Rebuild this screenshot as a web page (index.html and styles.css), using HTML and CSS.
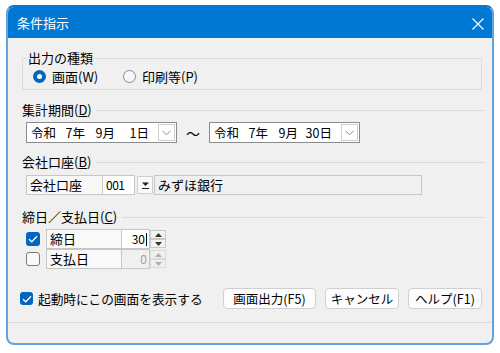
FILE: index.html
```html
<!DOCTYPE html>
<html lang="ja">
<head>
<meta charset="utf-8">
<title>条件指示</title>
<link rel="stylesheet" href="styles.css">
</head>
<body>
<div class="window">
  <div class="titlebar">
    <span class="title">条件指示</span>
    <svg class="close" width="12" height="12" viewBox="0 0 12 12"><path d="M0.5 0.5L11.5 11.5M11.5 0.5L0.5 11.5" stroke="#fff" stroke-width="1.1" fill="none"/></svg>
  </div>
  <div class="content">
    <fieldset class="group">
      <legend>出力の種類</legend>
      <div class="radios">
        <label class="radio r1"><span class="rb on"></span>画面(W)</label>
        <label class="radio"><span class="rb"></span>印刷等(P)</label>
      </div>
    </fieldset>

    <div class="sect s-d"><span>集計期間(<u>D</u>)</span></div>
    <div class="daterow">
      <div class="combo">
        <span class="dt"><span class="era">令和</span><span class="y">7年</span><span class="m">9月</span><span class="d">1日</span></span>
        <span class="ddbtn"><svg width="9" height="6" viewBox="0 0 9 6"><path d="M0.5 0.8L4.5 4.8L8.5 0.8" stroke="#8a8a8a" stroke-width="1" fill="none"/></svg></span>
      </div>
      <span class="tilde">〜</span>
      <div class="combo">
        <span class="dt"><span class="era">令和</span><span class="y">7年</span><span class="m">9月</span><span class="d">30日</span></span>
        <span class="ddbtn"><svg width="9" height="6" viewBox="0 0 9 6"><path d="M0.5 0.8L4.5 4.8L8.5 0.8" stroke="#8a8a8a" stroke-width="1" fill="none"/></svg></span>
      </div>
    </div>

    <div class="sect s-b"><span>会社口座(<u>B</u>)</span></div>
    <div class="bankrow">
      <span class="cell lbl">会社口座</span>
      <span class="cell code">001</span>
      <span class="pick"><svg width="9" height="9" viewBox="0 0 9 9"><path d="M1 1.5H8L4.5 5Z" fill="#222"/><path d="M1 7.5H8" stroke="#222" stroke-width="1.2"/></svg></span>
      <span class="cell bank">みずほ銀行</span>
    </div>

    <div class="sect s-c"><span>締日／支払日(<u>C</u>)</span></div>
    <div class="dayrows">
      <div class="dayrow">
        <span class="cb on"><svg width="10" height="8" viewBox="0 0 10 8"><path d="M1 4.2L3.8 6.8L9 1.2" stroke="#fff" stroke-width="1.3" fill="none"/></svg></span>
        <span class="cell dname">締日</span>
        <span class="cell num">30<i class="caret"></i></span>
        <span class="spin"><span class="sb"><svg width="7" height="4" viewBox="0 0 7 4"><path d="M0 4H7L3.5 0Z" fill="#333"/></svg></span><span class="sb"><svg width="7" height="4" viewBox="0 0 7 4"><path d="M0 0H7L3.5 4Z" fill="#333"/></svg></span></span>
      </div>
      <div class="dayrow">
        <span class="cb"></span>
        <span class="cell dname">支払日</span>
        <span class="cell num off">0</span>
        <span class="spin off"><span class="sb"><svg width="7" height="4" viewBox="0 0 7 4"><path d="M0 4H7L3.5 0Z" fill="#b0b0b0"/></svg></span><span class="sb"><svg width="7" height="4" viewBox="0 0 7 4"><path d="M0 0H7L3.5 4Z" fill="#b0b0b0"/></svg></span></span>
      </div>
    </div>

    <div class="bottomrow">
      <label class="startup"><span class="cb on"><svg width="10" height="8" viewBox="0 0 10 8"><path d="M1 4.2L3.8 6.8L9 1.2" stroke="#fff" stroke-width="1.3" fill="none"/></svg></span>起動時にこの画面を表示する</label>
      <div class="buttons">
        <button class="btn b1">画面出力(F5)</button>
        <button class="btn b2">キャンセル</button>
        <button class="btn b3">ヘルプ(F1)</button>
      </div>
    </div>
  </div>
  <div class="footer"></div>
</div>
</body>
</html>
```

FILE: styles.css
```css
* { box-sizing: border-box; }
html, body { margin: 0; padding: 0; background: #ffffff; }
body {
  font-family: "Noto Sans CJK JP", "Noto Sans", sans-serif;
  font-size: 13px;
  line-height: 16px;
  color: #000;
}
.window {
  width: 488px;
  height: 340px;
  margin: 5px 6px;
  border: 2px solid #62a2e2;
  border-top-color: #0078d4;
  border-radius: 8px;
  overflow: hidden;
  background: #f0f0f0;
  display: flex;
  flex-direction: column;
}
.titlebar {
  height: 31px;
  flex: none;
  background: #0078d4;
  color: #fff;
  display: flex;
  align-items: center;
  justify-content: space-between;
  padding: 1px 8px 0 9px;
}
.title { font-size: 13px; }
.close { display: block; margin-top: 2px; }
.content {
  flex: 1;
  padding: 12px 7px 0 14px;
  display: flex;
  flex-direction: column;
}
.footer {
  height: 21px;
  flex: none;
  border-top: 1px solid #dadada;
}
.group {
  margin: 0 3px 0 0;
  padding: 0 0 2px 10px;
  border: 1px solid #dcdcdc;
  min-width: 0;
}
.group legend {
  padding: 0 1px;
  margin-left: -6px;
  line-height: 16px;
}
.radios { display: flex; height: 21px; align-items: center; }
.radio { display: flex; align-items: center; gap: 6px; }
.r1 { width: 90px; }
.rb {
  width: 13px; height: 13px;
  border-radius: 50%;
  border: 1px solid #8a8a8a;
  background: #f7f7f7;
  display: inline-block;
  position: relative;
}
.rb.on { border: none; background: #0067c0; }
.rb.on::after {
  content: "";
  position: absolute;
  left: 4px; top: 4px;
  width: 5px; height: 5px;
  border-radius: 50%;
  background: #fff;
}
.sect {
  display: flex;
  align-items: center;
  gap: 5px;
}
.sect::after {
  content: "";
  flex: 1;
  height: 1px;
  background: #d9d9d9;
}
.sect u { text-underline-offset: 1px; }
.s-d { margin-top: 12px; }
.s-b { margin-top: 11px; }
.s-c { margin-top: 14px; }
.daterow {
  margin: 4px 0 0 4px;
  display: flex;
  align-items: center;
}
.combo {
  width: 151px;
  height: 21px;
  border: 1px solid #8c8c8c;
  background: #fff;
  display: flex;
  align-items: center;
  justify-content: space-between;
  padding: 0 1px 0 4px;
}
.dt { display: flex; font-size: 12.5px; }
.era { width: 26px; }
.y { width: 28px; text-align: right; }
.m { width: 30px; text-align: right; }
.d { width: 34px; text-align: right; }
.ddbtn {
  width: 17px;
  height: 17px;
  border: 1px solid #cfcfcf;
  background: #fff;
  display: flex;
  align-items: center;
  justify-content: center;
}
.tilde { width: 32px; text-align: center; font-size: 14px; }
.bankrow {
  margin: 5px 0 0 4px;
  display: flex;
  height: 20px;
}
.cell {
  height: 20px;
  border: 1px solid #c6c6c6;
  display: flex;
  align-items: center;
  padding: 0 3px;
}
.lbl { width: 77px; background: #f8f8f8; }
.code { width: 33px; background: #fff; margin-left: -1px; font-size: 12px; letter-spacing: -0.5px; }
.pick {
  width: 16px;
  height: 18px;
  margin: 1px 1px 0 2px;
  border: 1px solid #cfcfcf;
  background: #f9f9f9;
  display: flex;
  align-items: center;
  justify-content: center;
}
.bank { width: 268px; background: #f0f0f0; }
.dayrows { margin: 4px 0 0 4px; display: flex; flex-direction: column; }
.dayrow { display: flex; align-items: center; height: 20px; }
.dayrow .cb { margin-right: 6px; }
.cb {
  width: 14px; height: 14px;
  border: 1px solid #7a7a7a;
  border-radius: 3px;
  background: #f9f9f9;
  display: inline-flex;
  align-items: center;
  justify-content: center;
  flex: none;
}
.cb.on { border: none; background: #0067c0; }
.dname { width: 76px; background: #f9f9f9; }
.num { width: 29px; background: #fff; margin-left: -1px; justify-content: flex-end; padding-right: 2px; font-size: 12px; }
.num.off { color: #a0a0a0; background: #f0f0f0; }
.caret { display: inline-block; width: 1px; height: 13px; background: #000; margin-left: 1px; }
.spin { width: 16px; height: 20px; display: flex; flex-direction: column; padding: 1px 0; }
.sb {
  flex: 1;
  border: 1px solid #c8c8c8;
  background: #f3f3f3;
  display: flex;
  align-items: center;
  justify-content: center;
}
.spin.off .sb { background: #f0f0f0; border-color: #dadada; }
.bottomrow {
  margin-top: 19px;
  display: flex;
  align-items: center;
  justify-content: space-between;
  height: 21px;
  padding-right: 3px;
}
.startup { display: flex; align-items: center; gap: 5px; margin-left: -2px; font-size: 12.7px; }
.startup .cb { width: 13px; height: 13px; }
.buttons { display: flex; gap: 9px; }
.btn {
  font-family: inherit;
  font-size: 12.5px;
  height: 21px;
  padding: 0;
  border: 1px solid #d0d0d0;
  border-radius: 4px;
  background: #fdfdfd;
  color: #000;
  line-height: 19px;
}
.b1 { width: 93px; }
.b2 { width: 74px; }
.b3 { width: 74px; }
```
